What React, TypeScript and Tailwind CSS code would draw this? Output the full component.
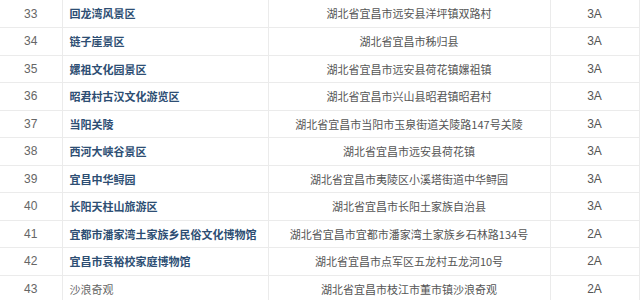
const rows: { no: number; name: string; addr: string; level: string; link: boolean }[] = [
    { no: 33, name: '回龙湾风景区', addr: '湖北省宜昌市远安县洋坪镇双路村', level: '3A', link: true },
    { no: 34, name: '链子崖景区', addr: '湖北省宜昌市秭归县', level: '3A', link: true },
    { no: 35, name: '嫘祖文化园景区', addr: '湖北省宜昌市远安县荷花镇嫘祖镇', level: '3A', link: true },
    { no: 36, name: '昭君村古汉文化游览区', addr: '湖北省宜昌市兴山县昭君镇昭君村', level: '3A', link: true },
    { no: 37, name: '当阳关陵', addr: '湖北省宜昌市当阳市玉泉街道关陵路147号关陵', level: '3A', link: true },
    { no: 38, name: '西河大峡谷景区', addr: '湖北省宜昌市远安县荷花镇', level: '3A', link: true },
    { no: 39, name: '宜昌中华鲟园', addr: '湖北省宜昌市夷陵区小溪塔街道中华鲟园', level: '3A', link: true },
    { no: 40, name: '长阳天柱山旅游区', addr: '湖北省宜昌市长阳土家族自治县', level: '3A', link: true },
    { no: 41, name: '宜都市潘家湾土家族乡民俗文化博物馆', addr: '湖北省宜昌市宜都市潘家湾土家族乡石林路134号', level: '2A', link: true },
    { no: 42, name: '宜昌市袁裕校家庭博物馆', addr: '湖北省宜昌市点军区五龙村五龙河10号', level: '2A', link: true },
    { no: 43, name: '沙浪奇观', addr: '湖北省宜昌市枝江市董市镇沙浪奇观', level: '2A', link: false },
];

export default function App() {
    return (
        <div className="w-[640px] h-[300px] overflow-hidden bg-white font-['Noto_Sans_CJK_SC','Liberation_Sans',sans-serif] text-[11px] text-[#555]">
            <table className="w-[639px] border-collapse table-fixed">
                <colgroup>
                    <col className="w-[62px]" />
                    <col className="w-[206px]" />
                    <col className="w-[282px]" />
                    <col className="w-[89px]" />
                </colgroup>
                <tbody>
                    {rows.map((r) => (
                        <tr key={r.no} className="h-[27.5px] border-b border-[#ebebeb]">
                            <td className="text-center border-r border-[#ebebeb] font-['Liberation_Sans',sans-serif] text-[12px] text-[#666]">{r.no}</td>
                            <td className="pl-[7px] border-r border-[#ebebeb] whitespace-nowrap">
                                {r.link ? (
                                    <span className="font-semibold text-[#2d4e73]">{r.name}</span>
                                ) : (
                                    <span className="text-[#666]">{r.name}</span>
                                )}
                            </td>
                            <td className="text-center border-r border-[#ebebeb] whitespace-nowrap">{r.addr}</td>
                            <td className="text-center border-r border-[#ebebeb] font-['Liberation_Sans',sans-serif] text-[12px] text-[#555]">{r.level}</td>
                        </tr>
                    ))}
                </tbody>
            </table>
        </div>
    );
}
